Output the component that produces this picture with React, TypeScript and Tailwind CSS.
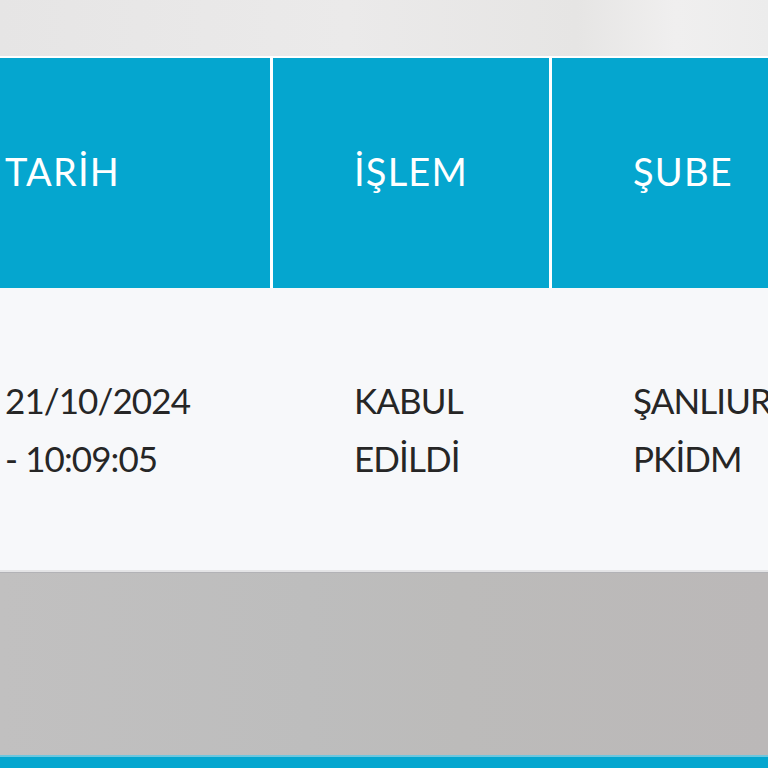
const font = { fontFamily: "Lato, 'Noto Sans', sans-serif" };

const columns = [
  { title: "TARİH", lines: ["21/10/2024", "- 10:09:05"], width: "w-[346px]" },
  { title: "İŞLEM", lines: ["KABUL", "EDİLDİ"], width: "w-[276px]" },
  { title: "ŞUBE", lines: ["ŞANLIURFA", "PKİDM"], width: "w-[300px]" },
];

export default function App() {
  return (
    <div
      className="w-[768px] h-[768px] overflow-hidden flex flex-col bg-[#e9e8e8]"
      style={font}
    >
      {/* top backdrop */}
      <div className="h-[56px] shrink-0 bg-[linear-gradient(90deg,#e6e5e5_0%,#ebeaea_45%,#e6e5e4_75%,#f0efef_88%,#ececec_100%)]" />

      {/* header row */}
      <div className="h-[232px] shrink-0 flex border-t-2 border-white ml-[-76px] gap-[3px] bg-white">
        {columns.map((c) => (
          <div
            key={c.title}
            className={`${c.width} shrink-0 bg-[#05a6cf] flex items-center pl-[81px] pb-[4px]`}
          >
            <span className="text-[38px] text-white tracking-[1.2px] whitespace-nowrap">
              {c.title}
            </span>
          </div>
        ))}
      </div>

      {/* data row */}
      <div className="h-[282px] shrink-0 flex ml-[-76px] gap-[3px] bg-[#f7f8fa]">
        {columns.map((c) => (
          <div
            key={c.title}
            className={`${c.width} shrink-0 flex flex-col justify-center pl-[81px]`}
          >
            {c.lines.map((l) => (
              <div
                key={l}
                className="text-[35px] leading-[58px] tracking-[-0.9px] text-[#262626] whitespace-nowrap"
              >
                {l}
              </div>
            ))}
          </div>
        ))}
      </div>

      {/* divider + grey backdrop */}
      <div className="h-[2px] shrink-0 bg-[#e4e4e6]" />
      <div className="h-[183px] shrink-0 border-t border-[#b2b2b6] bg-[linear-gradient(90deg,#c1c0c0_0%,#bdbdbd_40%,#bcbbba_60%,#bbb8b8_100%)]" />

      {/* bottom blue bar */}
      <div className="flex-1 bg-[#05a6cf] border-t-2 border-[#6cc6de]" />
    </div>
  );
}
